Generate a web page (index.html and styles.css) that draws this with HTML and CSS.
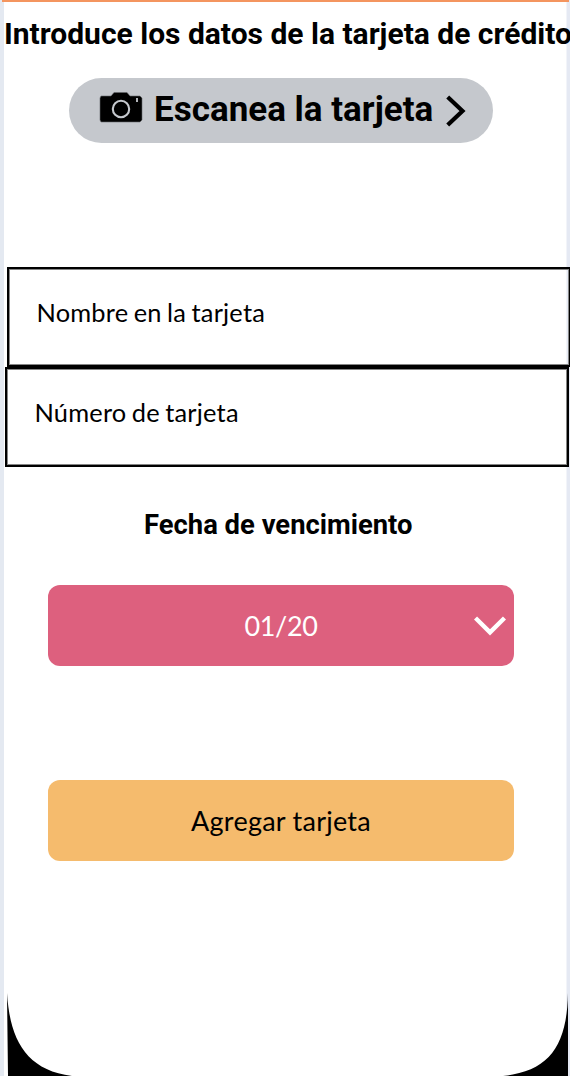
FILE: index.html
```html
<!DOCTYPE html>
<html lang="es">
<head>
<meta charset="utf-8">
<title>Agregar tarjeta</title>
<link rel="stylesheet" href="styles.css">
</head>
<body>
<main class="screen">
  <h1 class="title"><span>Introduce los datos de la tarjeta de crédito</span></h1>
  <button class="scan">
    <svg class="camera" width="44" height="32" viewBox="0 0 44 32">
      <path d="M2 4H12L15 .5H28L31 4H41L43 6V28L41 30H2L1 28V6Z" fill="#000" stroke="#66686b" stroke-width=".6"/>
      <circle cx="22" cy="17" r="8.2" fill="none" stroke="#c5c8cd" stroke-width="2.1"/>
      <path d="M38 6V10" stroke="#c5c8cd" stroke-width="1.8"/>
    </svg>
    <span class="scan-label">Escanea la tarjeta</span>
    <svg class="arrow" width="20" height="32" viewBox="0 0 20 32">
      <path d="M1.7 2L16.5 16L1.7 30" fill="none" stroke="#000" stroke-width="4.2"/>
    </svg>
  </button>
  <div class="field field-name"><span>Nombre en la tarjeta</span></div>
  <div class="field"><span>Número de tarjeta</span></div>
  <h2 class="subtitle"><span>Fecha de vencimiento</span></h2>
  <button class="button date"><span>01/20</span>
    <svg class="chevron" width="32" height="20" viewBox="0 0 32 20">
      <path d="M1.5 2L16 16.3L30.5 2" fill="none" stroke="#fff" stroke-width="4.4"/>
    </svg>
  </button>
  <button class="button add"><span>Agregar tarjeta</span></button>
  <svg class="corners" width="562" height="86" viewBox="0 0 562 86">
    <path d="M1 3C4 50 20 80 66 86H2Z" fill="#000"/>
    <path d="M562 3C561 55 544 81 497 86H562Z" fill="#000"/>
  </svg>
</main>
</body>
</html>
```
FILE: styles.css
```css
* { box-sizing: border-box; }
body { margin: 0; background: #fff; overflow: hidden; }
.screen {
  position: relative;
  display: flex;
  flex-direction: column;
  align-items: flex-start;
  width: 570px;
  height: 1076px;
  padding-left: 4px;
  background: linear-gradient(90deg, #e4e9f1 4px, #fff 4px, #fff 566px, #e5e9f3 567px);
  color: #000;
  font-family: Lato, "Noto Sans", sans-serif;
}
.screen::before {
  content: "";
  position: absolute;
  top: 0;
  left: 2px;
  width: 567px;
  height: 2px;
  background: #f4955f;
}
.title {
  margin: 14px 0 0;
  font: 700 30px/40px Roboto, sans-serif;
  white-space: nowrap;
}
button { border: 0; padding: 0; color: inherit; font: inherit; }
.scan {
  display: flex;
  align-items: center;
  width: 424px;
  height: 65px;
  margin: 24px 0 0 65px;
  padding-left: 30px;
  border-radius: 33px;
  background: #c5c8cd;
  font: 700 35px/40px Roboto, sans-serif;
}
.camera { margin-top: -5px; }
.scan-label { width: 279px; margin-left: 11px; margin-top: -1px; text-align: left; white-space: nowrap; }
.arrow { margin-left: 13px; }
.field {
  flex: none;
  width: 564px;
  height: 100px;
  margin-left: 1px;
  padding: 27px 0 0 27.5px;
  border: 2px solid #000;
  box-shadow: inset 0 0 0 1px #858585;
  font-size: 25.4px;
  line-height: 32px;
  letter-spacing: .2px;
  word-spacing: -1.3px;
}
.field-name { margin: 124px 0 0 3px; }
.subtitle {
  margin: 38px 0 0 140px;
  font: 700 27.4px/40px Roboto, sans-serif;
  white-space: nowrap;
}
.button {
  display: flex;
  align-items: center;
  justify-content: center;
  position: relative;
  width: 466px;
  height: 81px;
  margin-left: 44px;
  border-radius: 12px;
  font-size: 27px;
  letter-spacing: .25px;
}
.button span { margin-top: -1px; }
.date { margin-top: 40px; background: #dd607e; color: #fff; font-size: 27px; letter-spacing: -.4px; }
.chevron { position: absolute; right: 8px; top: 31px; }
.add { margin-top: 114px; background: #f5bb6d; }
.corners { position: absolute; left: 6px; bottom: 0; filter: blur(.6px); }
```
